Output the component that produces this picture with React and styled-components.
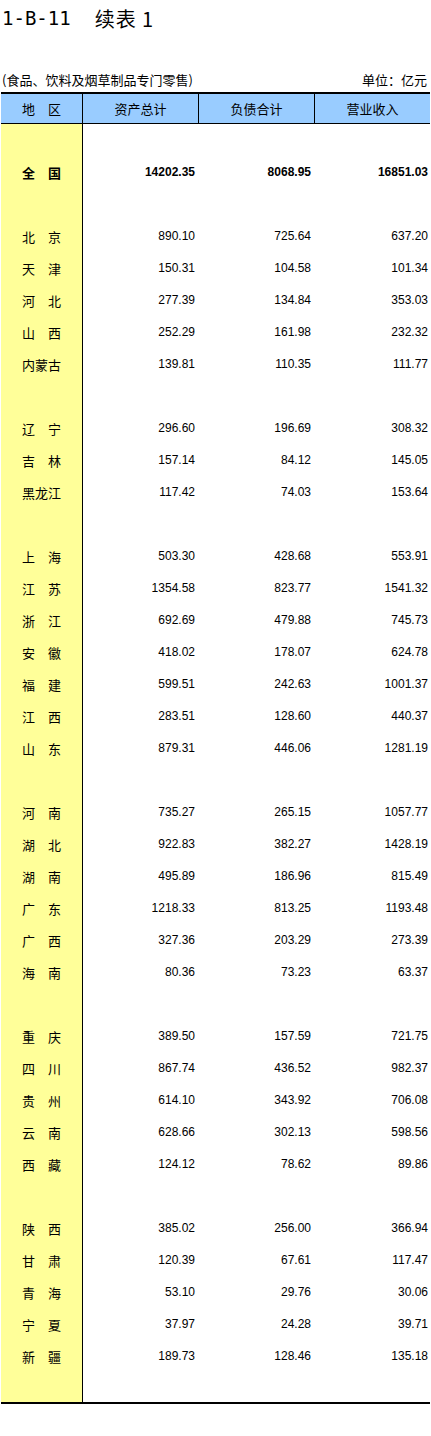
import React from "react";
import styled, { createGlobalStyle } from "styled-components";

const GlobalStyle = createGlobalStyle`
  body {
    margin: 0;
    background: #ffffff;
    font-family: "Liberation Sans", "Noto Sans CJK SC", sans-serif;
    color: #000000;
  }
`;

const Page = styled.div`
  width: 431px;
`;

const Title = styled.div`
  display: flex;
  align-items: center;
  height: 36px;
  padding-left: 2px;
  gap: 24px;
`;

const Code = styled.span`
  font-family: "DejaVu Sans Mono", "Liberation Mono", monospace;
  font-size: 19px;
`;

const Sub = styled.span`
  font-family: "Noto Sans CJK SC", sans-serif;
  font-size: 20px;
  letter-spacing: 1px;
`;

const Caption = styled.div`
  display: flex;
  justify-content: space-between;
  align-items: flex-end;
  height: 56px;
  padding: 0 4px 4px 2px;
  box-sizing: border-box;
  font-family: "Noto Sans CJK SC", sans-serif;
  font-size: 13px;
  line-height: 16px;
`;

const Table = styled.div`
  margin-left: 1px;
  width: 429px;
  display: grid;
  grid-template-columns: 82px 116px 116px 1fr;
  border-top: 2px solid #000;
  border-bottom: 2px solid #000;
`;

const HeadCell = styled.div`
  height: 29px;
  background: #99ccff;
  border-bottom: 1px solid #000;
  border-right: ${(p) => (p.last ? "none" : "1px solid #000")};
  display: flex;
  align-items: center;
  justify-content: center;
  font-family: "Noto Sans CJK SC", sans-serif;
  font-size: 13px;
`;

const NameCell = styled.div`
  height: ${(p) => (p.short ? 30 : 32)}px;
  background: #ffff99;
  border-right: 1px solid #000;
  display: flex;
  align-items: center;
  justify-content: center;
  font-family: "Noto Sans CJK SC", sans-serif;
  font-size: 13px;
  font-weight: ${(p) => (p.bold ? 700 : 400)};
`;

const NumCell = styled.div`
  height: ${(p) => (p.short ? 30 : 32)}px;
  display: flex;
  align-items: center;
  justify-content: flex-end;
  padding-right: ${(p) => (p.last ? 2 : 4)}px;
  font-family: "Liberation Sans", Arial, sans-serif;
  font-size: 12px;
  font-weight: ${(p) => (p.bold ? 700 : 400)};
`;

const rows = [
  null,
  ["全　国", "14202.35", "8068.95", "16851.03", true],
  null,
  ["北　京", "890.10", "725.64", "637.20"],
  ["天　津", "150.31", "104.58", "101.34"],
  ["河　北", "277.39", "134.84", "353.03"],
  ["山　西", "252.29", "161.98", "232.32"],
  ["内蒙古", "139.81", "110.35", "111.77"],
  null,
  ["辽　宁", "296.60", "196.69", "308.32"],
  ["吉　林", "157.14", "84.12", "145.05"],
  ["黑龙江", "117.42", "74.03", "153.64"],
  null,
  ["上　海", "503.30", "428.68", "553.91"],
  ["江　苏", "1354.58", "823.77", "1541.32"],
  ["浙　江", "692.69", "479.88", "745.73"],
  ["安　徽", "418.02", "178.07", "624.78"],
  ["福　建", "599.51", "242.63", "1001.37"],
  ["江　西", "283.51", "128.60", "440.37"],
  ["山　东", "879.31", "446.06", "1281.19"],
  null,
  ["河　南", "735.27", "265.15", "1057.77"],
  ["湖　北", "922.83", "382.27", "1428.19"],
  ["湖　南", "495.89", "186.96", "815.49"],
  ["广　东", "1218.33", "813.25", "1193.48"],
  ["广　西", "327.36", "203.29", "273.39"],
  ["海　南", "80.36", "73.23", "63.37"],
  null,
  ["重　庆", "389.50", "157.59", "721.75"],
  ["四　川", "867.74", "436.52", "982.37"],
  ["贵　州", "614.10", "343.92", "706.08"],
  ["云　南", "628.66", "302.13", "598.56"],
  ["西　藏", "124.12", "78.62", "89.86"],
  null,
  ["陕　西", "385.02", "256.00", "366.94"],
  ["甘　肃", "120.39", "67.61", "117.47"],
  ["青　海", "53.10", "29.76", "30.06"],
  ["宁　夏", "37.97", "24.28", "39.71"],
  ["新　疆", "189.73", "128.46", "135.18"],
  null,
];

export default function App() {
  return (
    <Page>
      <GlobalStyle />
      <Title>
        <Code>1-B-11</Code>
        <Sub>续表 1</Sub>
      </Title>
      <Caption>
        <span>(食品、饮料及烟草制品专门零售)</span>
        <span>单位：亿元</span>
      </Caption>
      <Table>
        <HeadCell>地　区</HeadCell>
        <HeadCell>资产总计</HeadCell>
        <HeadCell>负债合计</HeadCell>
        <HeadCell last>营业收入</HeadCell>
        {rows.map((r, i) => {
          const short = i === rows.length - 1;
          const [name, a, b, c, bold] = r || ["", "", "", "", false];
          return (
            <React.Fragment key={i}>
              <NameCell short={short} bold={bold}>{name}</NameCell>
              <NumCell short={short} bold={bold}>{a}</NumCell>
              <NumCell short={short} bold={bold}>{b}</NumCell>
              <NumCell short={short} bold={bold} last>{c}</NumCell>
            </React.Fragment>
          );
        })}
      </Table>
    </Page>
  );
}
